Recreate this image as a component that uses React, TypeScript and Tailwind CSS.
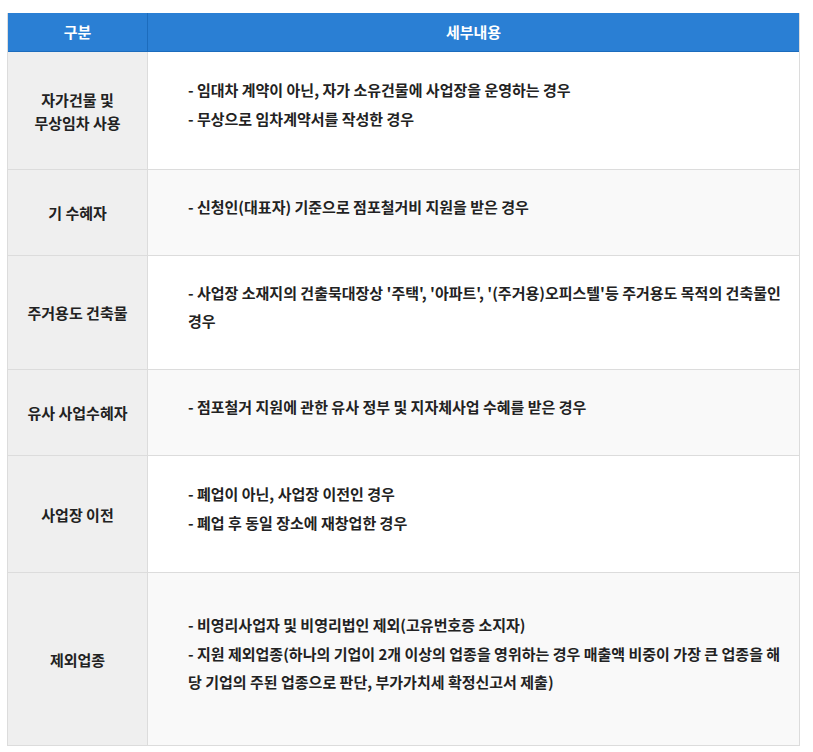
const ROWS: { label: string[]; items: string[]; h: string; alt: boolean }[] = [
  {
    label: ["자가건물 및", "무상임차 사용"],
    items: ["- 임대차 계약이 아닌, 자가 소유건물에 사업장을 운영하는 경우", "- 무상으로 임차계약서를 작성한 경우"],
    h: "h-[117px]",
    alt: false,
  },
  {
    label: ["기 수혜자"],
    items: ["- 신청인(대표자) 기준으로 점포철거비 지원을 받은 경우"],
    h: "h-[86px]",
    alt: true,
  },
  {
    label: ["주거용도 건축물"],
    items: ["- 사업장 소재지의 건출묵대장상 '주택', '아파트', '(주거용)오피스텔'등 주거용도 목적의 건축물인 경우"],
    h: "h-[114px]",
    alt: false,
  },
  {
    label: ["유사 사업수혜자"],
    items: ["- 점포철거 지원에 관한 유사 정부 및 지자체사업 수혜를 받은 경우"],
    h: "h-[86px]",
    alt: true,
  },
  {
    label: ["사업장 이전"],
    items: ["- 폐업이 아닌, 사업장 이전인 경우", "- 폐업 후 동일 장소에 재창업한 경우"],
    h: "h-[117px]",
    alt: false,
  },
  {
    label: ["제외업종"],
    items: [
      "- 비영리사업자 및 비영리법인 제외(고유번호증 소지자)",
      "- 지원 제외업종(하나의 기업이 2개 이상의 업종을 영위하는 경우 매출액 비중이 가장 큰 업종을 해당 기업의 주된 업종으로 판단, 부가가치세 확정신고서 제출)",
    ],
    h: "h-[173px]",
    alt: true,
  },
];

export default function App() {
  return (
    <div className="min-h-[752px] bg-white pt-[13px] pl-[7px] font-['Noto_Sans_CJK_KR','Noto_Sans',sans-serif] text-[15px] font-bold text-[#222]">
      <div className="w-[793px] border-x border-b border-[#dcdcdc]">
        {/* header */}
        <div className="flex h-[39px] border-b border-[#1c6cbd] bg-[#2a7fd4] text-white">
          <div className="flex w-[140px] items-center justify-center border-r border-[#1c6cbd]">구분</div>
          <div className="flex flex-1 items-center justify-center">세부내용</div>
        </div>

        {ROWS.map((row, i) => (
          <div key={i} className={`flex ${row.h} ${i > 0 ? "border-t border-[#dcdcdc]" : ""}`}>
            <div className="flex w-[140px] shrink-0 flex-col items-center justify-center border-r border-[#dcdcdc] bg-[#efefef] leading-[23px]">
              {row.label.map((l) => (
                <span key={l}>{l}</span>
              ))}
            </div>
            <div
              className={`flex flex-1 flex-col justify-center gap-px pr-[16px] pl-[40px] pb-[12px] leading-[28px] ${
                row.alt ? "bg-[#f9f9f9]" : "bg-white"
              }`}
            >
              {row.items.map((t) => (
                <p key={t}>{t}</p>
              ))}
            </div>
          </div>
        ))}
      </div>
    </div>
  );
}
